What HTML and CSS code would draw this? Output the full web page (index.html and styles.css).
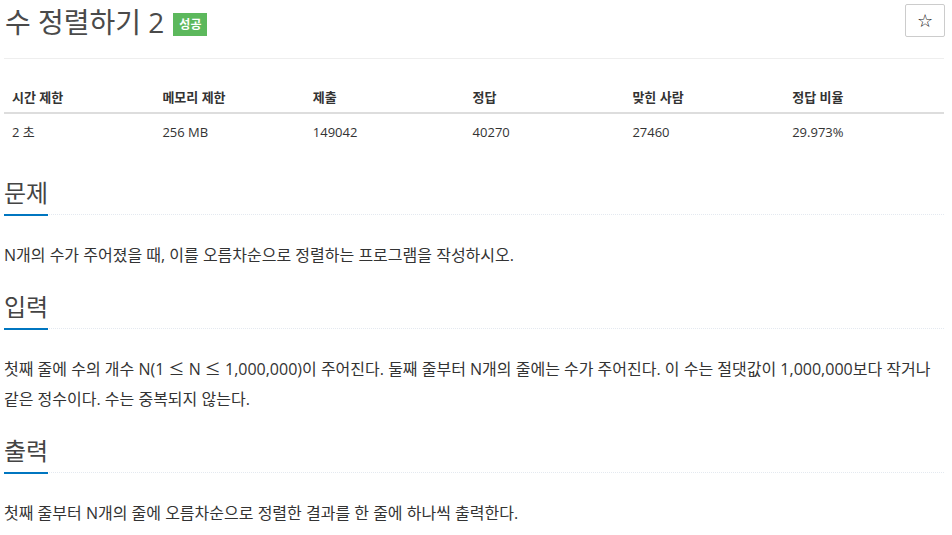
FILE: index.html
```html
<!DOCTYPE html>
<html lang="ko">
<head>
<meta charset="utf-8">
<title>수 정렬하기 2</title>
<link rel="stylesheet" href="styles.css">
</head>
<body>
<div class="page">
  <div class="page-header">
    <h1 class="title"><span class="title-text">수 정렬하기 2</span><span class="badge">성공</span></h1>
    <button class="star" type="button">☆</button>
  </div>

  <table class="info">
    <thead>
      <tr>
        <th class="c16">시간 제한</th>
        <th class="c16">메모리 제한</th>
        <th class="c17">제출</th>
        <th class="c17">정답</th>
        <th class="c17">맞힌 사람</th>
        <th class="c17">정답 비율</th>
      </tr>
    </thead>
    <tbody>
      <tr>
        <td>2 초</td>
        <td>256 MB</td>
        <td>149042</td>
        <td>40270</td>
        <td>27460</td>
        <td>29.973%</td>
      </tr>
    </tbody>
  </table>

  <section class="section">
    <div class="headline"><h2>문제</h2></div>
    <p class="text">N개의 수가 주어졌을 때, 이를 오름차순으로 정렬하는 프로그램을 작성하시오.</p>
  </section>

  <section class="section">
    <div class="headline"><h2>입력</h2></div>
    <p class="text"><span>첫째 줄에 수의 개수 N(1 <span class="sym">≤</span> N <span class="sym">≤</span> 1,000,000)이 주어진다. 둘째 줄부터 N개의 줄에는 수가 주어진다. 이 수는 절댓값이 1,000,000보다 작거나</span> <span>같은 정수이다. 수는 중복되지 않는다.</span></p>
  </section>

  <section class="section">
    <div class="headline"><h2>출력</h2></div>
    <p class="text">첫째 줄부터 N개의 줄에 오름차순으로 정렬한 결과를 한 줄에 하나씩 출력한다.</p>
  </section>
</div>
</body>
</html>
```

FILE: styles.css
```css
html, body {
  margin: 0;
  padding: 0;
  background: #fff;
}

body {
  font-family: "Open Sans", "Noto Sans CJK KR", sans-serif;
  color: #333;
}

.page {
  padding: 0 8px 0 4px;
}

.page-header {
  display: flex;
  justify-content: space-between;
  align-items: flex-start;
  padding: 4px 0 20px 0;
  border-bottom: 1px solid #eee;
}

.title {
  margin: 3px 0 0 1px;
  font-size: 28px;
  line-height: 31px;
  font-weight: 400;
  color: #4a4a4a;
  display: flex;
  align-items: center;
}

.badge {
  display: inline-block;
  margin-left: 9px;
  margin-top: 4px;
  padding: 0 6px;
  height: 23px;
  line-height: 23px;
  background: #5cb85c;
  color: #fff;
  font-size: 12px;
  font-weight: 700;
}

.star {
  width: 40px;
  height: 33px;
  padding: 0;
  margin: 0 -1px 0 0;
  background: #fff;
  border: 1px solid #ccc;
  border-radius: 2px;
  font-size: 18px;
  color: #111;
  font-family: "DejaVu Sans", sans-serif;
  line-height: 31px;
}

.info {
  width: 100%;
  margin: 17px 0 30px 0;
  border-collapse: collapse;
  font-size: 13px;
}

.c16 { width: 16%; }
.c17 { width: 17%; }

.info th {
  text-align: left;
  font-weight: 700;
  padding: 11px 8px 5px 8px;
  line-height: 20px;
  border-bottom: 2px solid #ddd;
}

.info td {
  padding: 8px;
  line-height: 20px;
}

.section {
  margin-top: 24px;
}

.headline {
  border-bottom: 1px dotted #e4e9f0;
  margin: 0 0 25px 0;
}

.headline h2 {
  display: inline-block;
  margin: 0 0 -2px 0;
  padding-bottom: 8px;
  border-bottom: 2px solid #0076c0;
  font-size: 24px;
  line-height: 26px;
  font-weight: 400;
  color: #444;
}

.text {
  margin: 0;
  font-size: 16px;
  line-height: 30px;
  color: #333;
  word-break: keep-all;
}

.sym {
  display: inline-block;
  width: 16px;
  line-height: 20px;
  text-align: center;
  font-family: "Noto Sans CJK KR", sans-serif;
}
```
